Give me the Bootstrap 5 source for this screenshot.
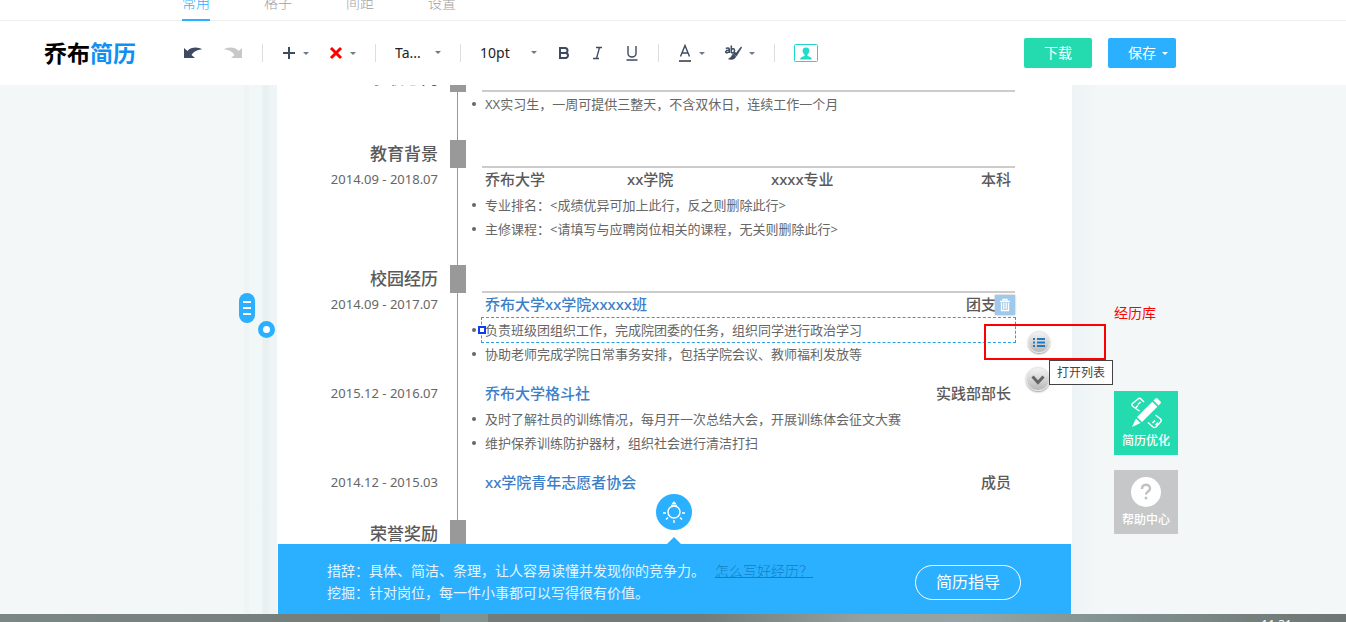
<!DOCTYPE html>
<html lang="zh-CN">
<head>
<meta charset="utf-8">
<meta name="viewport" content="width=device-width, initial-scale=1">
<title>乔布简历</title>
<link href="https://cdn.jsdelivr.net/npm/bootstrap@5.3.0/dist/css/bootstrap.min.css" rel="stylesheet">
<style>
  :root { --sky: #2ab0ff; --mint: #24dbb0; --ink: #3d4a60; --txt: #666; }
  body { font-family: "Noto Sans", "Noto Sans CJK SC", sans-serif; font-size: 13px; color: var(--txt); background: #f3f7f8; }
  button { font-family: inherit; }

  /* top tabs and toolbar */
  .tabs-bar { height: 21px; padding-left: 182px; gap: 54px; border-bottom: 1px solid #efefef; align-items: flex-end; }
  .tab-item { font-size: 14px; line-height: 20px; height: 28px; font-weight: 300; color: #a0a0a0; text-decoration: none; margin-bottom: -1px; white-space: nowrap; }
  .tab-item.active { color: var(--sky); border-bottom: 2px solid var(--sky); }
  .tool-bar { height: 64px; padding: 0 170px 0 44px; }
  .brand { font-size: 23px; line-height: 28px; font-weight: 700; color: #000; text-decoration: none; white-space: nowrap; margin-right: 47px; }
  .brand span { color: #1090f0; }
  .tool-group { gap: 20px; }
  .tool-group button { border: 0; background: none; padding: 0; color: var(--ink); display: flex; align-items: center; gap: 7px; }
  .tool-sep { width: 1px; height: 18px; margin: 0 19px; background: #dedede; flex: none; }
  .caret { width: 0; border: 3px solid transparent; border-top-color: #6c7a90; border-bottom: 0; }
  .tool-group select { appearance: none; border: 0; outline: 0; padding: 0; font-size: 14px; line-height: 22px; color: #222; text-align: left;
    background: url("data:image/svg+xml,%3Csvg xmlns='http://www.w3.org/2000/svg' width='6' height='3'%3E%3Cpath d='M0 0h6L3 3z' fill='%236c7a90'/%3E%3C/svg%3E") no-repeat right 9px; }
  .pick-font { width: 46px; }
  .pick-size { width: 57px; }
  .main-btn { width: 68px; height: 30px; border: 0; border-radius: 2px; color: #fff; font-size: 14px; line-height: 30px; padding: 0; display: flex; align-items: center; justify-content: center; gap: 6px; }
  .main-btn .caret { border-top-color: #fff; }
  .btn-save { padding-left: 12px; background: var(--sky); }
  .btn-load { background: var(--mint); }

  /* work area */
  .work { display: grid; grid-template-columns: 277px minmax(0, 1fr) 274px; }
  .left-side { background: linear-gradient(90deg, #f3f7f8 244px, #eff4f5 244px, #eff4f5 249px, #f2f7f8 250px, #f1f6f7 262px, #e9f0f0 263px, #e9f0f0 268px, #eff5f6 270px); }
  .right-side { padding: 217px 0 0 42px; background: linear-gradient(90deg, #eef4f5, #f3f7f8 34px); }
  .pill { left: 239px; top: 208px; width: 16px; height: 30px; border-radius: 8px; border: 0; padding: 0; background: var(--sky); }
  .knob { left: 258px; top: 236px; width: 17px; height: 17px; border-radius: 50%; border: 5px solid var(--sky); background: #fff; padding: 0; }
  .side-card { width: 64px; height: 64px; border: 0; padding: 6px 0 0; color: #fff; font-size: 12px; font-weight: 500; line-height: 18px; background: #c6c7c9; display: flex; flex-direction: column; align-items: center; gap: 3px; }
  .side-card.green { background: var(--mint); }
  .note { color: #f00; font-size: 14px; line-height: 22px; margin: 0 0 67px; }

  /* resume sheet */
  .paper { background: #fff; min-height: 0; overflow: hidden; }
  .sheet { min-height: 0; overflow: hidden; }
  .cv { margin-top: -21px; background: linear-gradient(#999, #999) 180px 0 / 1px 100% no-repeat; }
  .cv-head { display: grid; grid-template-columns: 161px 16px minmax(0, 1fr); gap: 0 12px; height: 28px; padding-right: 57px; }
  .cv-head h2 { font-size: 17px; line-height: 28px; font-weight: 500; text-align: right; margin: 0; color: #5a5a5a; }
  .cv-head i { background: #999; }
  .cv-head b { border-bottom: 2px solid #ccc; margin-left: 4px; }
  .cv-sec { padding-bottom: 24px; }
  .entry { display: grid; grid-template-columns: 161px minmax(0, 1fr); gap: 0 44px; padding-right: 57px; }
  .entry + .entry { margin-top: 16px; }
  .entry time { line-height: 22px; text-align: right; }
  .entry h3 { font-size: 15px; line-height: 22px; margin: 0 0 3px; font-weight: 500; padding: 0 4px 0 3px; display: flex; justify-content: space-between; color: #5a5a5a; position: relative; }
  .entry h3.four { display: grid; grid-template-columns: 142px 144px 1fr auto; }
  .entry h3 a { color: #3c7fc8; text-decoration: none; }
  .entry ul { list-style: none; margin: 0 0 0 -10px; padding: 0; }
  .entry li { display: flex; align-items: center; gap: 6px; line-height: 24px; }
  .entry li::before { content: ""; width: 4px; height: 4px; border-radius: 50%; background: #666; flex: none; }
  .entry p { margin: 0; padding-left: 3px; flex: 1; white-space: nowrap; position: relative; }
  .picked { outline: 1px dashed #2b9fe6; }
  .handle { left: -4px; top: 8px; width: 8px; height: 8px; border: 2px solid #0a3cf5; background: #fff; }
  .trash { right: 0; top: 2px; width: 20px; height: 20px; border: 0; padding: 0; background: #9fc8ea; box-shadow: 0 0 2px #aaa; display: flex; align-items: center; justify-content: center; }

  /* blue hint bar */
  .hint { margin: 0 1px; height: 70px; padding: 6px 50px 0 49px; background: var(--sky); color: #e4f5ff; font-size: 14px; line-height: 22px; white-space: nowrap; }
  .hint a { color: #1180c8; margin-left: 10px; font-weight: 300; }
  .hint-tip { left: 50%; top: -7px; margin-left: -8px; border: 7px solid transparent; border-top: 0; border-bottom-color: var(--sky); }
  .bulb { left: 50%; top: -50px; margin-left: -19px; width: 36px; height: 36px; border: 0; border-radius: 50%; background: var(--sky); padding: 0; }
  .guide { width: 106px; height: 35px; border: 1px solid #fff; border-radius: 18px; background: none; color: #fff; font-size: 16px; padding: 0; }

  /* floating items over the sheet */
  .frame-red { right: 240px; top: 239px; width: 122px; height: 36px; border: 2px solid #f00; }
  .orb { border: 1px solid #e2e2e2; border-radius: 50%; background: linear-gradient(#f4f4f4, #b8b8b8); box-shadow: 0 1px 2px #999; padding: 0; width: 22px; height: 22px; right: 296px; display: flex; align-items: center; justify-content: center; }
  .orb-list { top: 246px; }
  .orb-down { top: 282px; width: 24px; height: 24px; }
  .tip-box { right: 233px; top: 275px; height: 25px; border: 1px solid #444; background: #fff; color: #444; font-size: 12px; line-height: 23px; padding: 0 7px; }

  .desk { height: 8px; overflow: hidden; color: #fff; font-size: 12px; line-height: 20px; padding: 1px 54px 0 0;
    background: linear-gradient(90deg, transparent 440px, #829290 440px, #829290 488px, transparent 488px), linear-gradient(90deg, #7b8785, #737c79 30%, #707b7a 52%, #94a09f 64%, #95a3a4 72%, #829391 82%, #727b78 96%, #6e7673); }
</style>
</head>
<body class="d-flex flex-column vh-100 overflow-hidden">

<nav class="tabs-bar d-flex bg-white flex-shrink-0" aria-label="工具分类">
  <a class="tab-item active" href="#">常用</a>
  <a class="tab-item" href="#">格子</a>
  <a class="tab-item" href="#">间距</a>
  <a class="tab-item" href="#">设置</a>
</nav>

<header class="tool-bar d-flex align-items-center bg-white flex-shrink-0">
  <a class="brand" href="#">乔布<span>简历</span></a>
  <div class="tool-group d-flex align-items-center">
    <button type="button" aria-label="撤销"><svg width="20" height="14" viewBox="0 0 20 14"><path d="M1 2v10h11L8.500 9C10 6 14 3.500 19 3.500 16 1 8 .5 4.500 5z" fill="#3d4a60"/></svg></button>
    <button type="button" aria-label="重做"><svg width="20" height="14" viewBox="0 0 20 14"><path d="M19 2v10H8l3.500-3C10 6 6 3.500 1 3.500 4 1 12 .5 15.500 5z" fill="#c8c8c8"/></svg></button>
  </div>
  <span class="tool-sep"></span>
  <div class="tool-group d-flex align-items-center">
    <button type="button" aria-label="添加"><svg width="14" height="14"><path d="M7 1v12M1 7h12" stroke="#3d4a60" stroke-width="2"/></svg><span class="caret"></span></button>
    <button type="button" aria-label="删除"><svg width="14" height="14"><path d="M2 2l10 10M12 2L2 12" stroke="#f00" stroke-width="3"/></svg><span class="caret"></span></button>
  </div>
  <span class="tool-sep"></span>
  <div class="tool-group d-flex"><select class="pick-font" aria-label="字体"><option>Ta...</option></select></div>
  <span class="tool-sep"></span>
  <div class="tool-group d-flex align-items-center">
    <select class="pick-size" aria-label="字号"><option>10pt</option></select>
    <button type="button" aria-label="粗体"><svg width="14" height="16" viewBox="0 0 14 16"><path d="M3 3h5a2.500 2.500 0 0 1 0 5H3zM3 8h5.500a2.500 2.500 0 0 1 0 5H3z" fill="none" stroke="#3d4a60" stroke-width="2"/></svg></button>
    <button type="button" aria-label="斜体"><svg width="14" height="16" viewBox="0 0 14 16"><path d="M5 2.500h6M2 13.500h6M8.500 2.500l-3 11" fill="none" stroke="#3d4a60" stroke-width="1.300"/></svg></button>
    <button type="button" aria-label="下划线"><svg width="14" height="16" viewBox="0 0 14 16"><path d="M3 1v7.500a4 3.500 0 0 0 8 0V1M1.500 15h11" fill="none" stroke="#3d4a60" stroke-width="1.400"/></svg></button>
  </div>
  <span class="tool-sep"></span>
  <div class="tool-group d-flex align-items-center">
    <button type="button" aria-label="文字颜色"><svg width="14" height="18" viewBox="0 0 14 18"><path d="M2.500 12.500L7 1.500l4.500 11M4 9h6" fill="none" stroke="#3d4a60" stroke-width="1.400"/><path d="M1 16h12v2H1z" fill="#666"/></svg><span class="caret"></span></button>
    <button type="button" aria-label="突出显示"><svg width="17" height="16" viewBox="0 0 17 16"><path d="M.8 3.500q3-1.200 3.500.8V8M4.300 5.300C0 4.800 0 8.300 2.200 7.800q2-.4 2.100-1.500M6.300 .5V8M6.300 5c.8-2.200 3.500-1.500 3.200.8S7.200 8.500 6.300 7" fill="none" stroke="#3d4a60" stroke-width="1.500"/><path d="M17 2L11.500 11 8.500 9l1.200-1.800 1.600.8L15.500 2.500zM8 9l3 2.500Q9 15.500 3.500 14q2.800-1.200 4.500-5z" fill="#3d4a60" stroke="#3d4a60" stroke-width=".6"/></svg><span class="caret"></span></button>
  </div>
  <span class="tool-sep"></span>
  <div class="tool-group d-flex"><button type="button" aria-label="证件照"><svg width="24" height="18" viewBox="0 0 24 18"><rect x=".5" y=".5" width="23" height="17" rx="1" fill="none" stroke="#20d8c8"/><path d="M12 3.500c4.500 0 4 5 1.500 7v1.500c2 .6 4 1 4.500 3.500H6c.5-2.500 2.500-2.900 4.500-3.500v-1.500c-2.500-2-3-7 1.500-7z" fill="#20dccb"/></svg></button></div>
  <div class="d-flex gap-3 ms-auto">
    <button type="button" class="main-btn btn-load">下载</button>
    <button type="button" class="main-btn btn-save">保存<span class="caret"></span></button>
  </div>
</header>

<main class="work flex-grow-1 position-relative overflow-hidden">
  <aside class="left-side">
    <button type="button" class="pill position-absolute" aria-label="目录"><svg class="d-block mx-auto" width="8" height="14"><path d="M0 1h8M0 7h8M0 13h8" stroke="#fff" stroke-width="2"/></svg></button>
    <button type="button" class="knob position-absolute" aria-label="定位"></button>
  </aside>

  <section class="paper d-flex flex-column">
    <div class="sheet flex-grow-1">
      <div class="cv">
        <div class="cv-sec">
          <div class="cv-head"><h2>求职意向</h2><i></i><b></b></div>
          <div class="entry"><span></span><ul><li><p>XX实习生，一周可提供三整天，不含双休日，连续工作一个月</p></li></ul></div>
        </div>
        <div class="cv-sec">
          <div class="cv-head"><h2>教育背景</h2><i></i><b></b></div>
          <div class="entry">
            <time>2014.09 - 2018.07</time>
            <div>
              <h3 class="four"><span>乔布大学</span><span>xx学院</span><span>xxxx专业</span><span>本科</span></h3>
              <ul><li><p>专业排名：&lt;成绩优异可加上此行，反之则删除此行&gt;</p></li><li><p>主修课程：&lt;请填写与应聘岗位相关的课程，无关则删除此行&gt;</p></li></ul>
            </div>
          </div>
        </div>
        <div class="cv-sec">
          <div class="cv-head"><h2>校园经历</h2><i></i><b></b></div>
          <div class="entry">
            <time>2014.09 - 2017.07</time>
            <div>
              <h3><a href="#">乔布大学xx学院xxxxx班</a><span>团支书</span>
                <button type="button" class="trash position-absolute" aria-label="删除此行"><svg width="12" height="14" viewBox="0 0 12 14"><path d="M1 3.500h10M4 3V1.500h4V3M2.500 5v7.500h7V5M4.800 5v6M7.200 5v6" fill="none" stroke="#fff" stroke-width="1.300"/></svg></button></h3>
              <ul><li><p class="picked"><span class="handle position-absolute"></span>负责班级团组织工作，完成院团委的任务，组织同学进行政治学习</p></li><li><p>协助老师完成学院日常事务安排，包括学院会议、教师福利发放等</p></li></ul>
            </div>
          </div>
          <div class="entry">
            <time>2015.12 - 2016.07</time>
            <div>
              <h3><a href="#">乔布大学格斗社</a><span>实践部部长</span></h3>
              <ul><li><p>及时了解社员的训练情况，每月开一次总结大会，开展训练体会征文大赛</p></li><li><p>维护保养训练防护器材，组织社会进行清洁打扫</p></li></ul>
            </div>
          </div>
          <div class="entry">
            <time>2014.12 - 2015.03</time>
            <div><h3><a href="#">xx学院青年志愿者协会</a><span>成员</span></h3></div>
          </div>
        </div>
        <div class="cv-sec">
          <div class="cv-head"><h2>荣誉奖励</h2><i></i><b></b></div>
        </div>
      </div>
    </div>
    <div class="hint d-flex align-items-center justify-content-between position-relative flex-shrink-0">
      <button type="button" class="bulb position-absolute" aria-label="提示"><svg class="d-block" width="36" height="36" viewBox="0 0 36 36" fill="none" stroke="#fff" stroke-width="1.400"><circle cx="18" cy="18" r="6"/><path d="M15 11.500h6M16 9.500h4M18 7.500v2M7 19h3M26 19h3M10 25.500l2-2M26 25.500l-2-2M18 26v3"/></svg></button>
      <span class="hint-tip position-absolute"></span>
      <div>
        <div>措辞：具体、简洁、条理，让人容易读懂并发现你的竞争力。<a href="#">怎么写好经历？</a></div>
        <div>挖掘：针对岗位，每一件小事都可以写得很有价值。</div>
      </div>
      <button type="button" class="guide">简历指导</button>
    </div>
  </section>

  <aside class="right-side">
    <p class="note">经历库</p>
    <div class="d-flex flex-column" style="gap:15px">
      <button type="button" class="side-card green"><svg class="flex-shrink-0" width="32" height="32" viewBox="0 0 32 32"><path d="M9.500 14L3 9.500Q1 8 2.500 6.500L8 2q1.500-1.500 3 0l3 3M5.500 11l2.500-2.500M8 7.500L10.500 5M18 25.500l5 4.500q1.500 1 3 0l4.500-5q1.500-1.500 0-3L25.500 18M22.500 26l2.500-2.500M25.500 28l2.500-2.500" fill="none" stroke="#fff" stroke-width="1.500"/><path d="M23.500 3.500l2-2q1-1 2 0l3 3q1 1 0 2l-2 2zM22.300 4.700l5 5L12 25l-5-5zM6 21.500l4.500 4.500L2 30z" fill="#fff"/></svg>简历优化</button>
      <button type="button" class="side-card"><svg class="flex-shrink-0" width="32" height="32" viewBox="0 0 32 32"><circle cx="16" cy="16" r="15" fill="#fff"/><path d="M12 13c0-5.500 8-5.500 8-.5 0 3-4 3-4 6" fill="none" stroke="#c0c1c3" stroke-width="2.400"/><circle cx="16" cy="22" r="1.500" fill="#c0c1c3"/></svg>帮助中心</button>
    </div>
  </aside>

  <button type="button" class="orb orb-list position-absolute" aria-label="打开列表"><svg width="12" height="9"><path d="M0 1h2M4 1h8M0 4.500h2M4 4.500h8M0 8h2M4 8h8" stroke="#2478c0" stroke-width="2"/></svg></button>
  <button type="button" class="orb orb-down position-absolute" aria-label="下移"><svg width="14" height="11"><path d="M1.500 2.500L7 8.500l5.500-6" fill="none" stroke="#666" stroke-width="3"/></svg></button>
  <div class="frame-red position-absolute"></div>
  <div class="tip-box position-absolute" role="tooltip">打开列表</div>
</main>

<footer class="desk text-end flex-shrink-0">11:31</footer>
<script src="https://cdn.jsdelivr.net/npm/bootstrap@5.3.0/dist/js/bootstrap.bundle.min.js"></script>
</body>
</html>
